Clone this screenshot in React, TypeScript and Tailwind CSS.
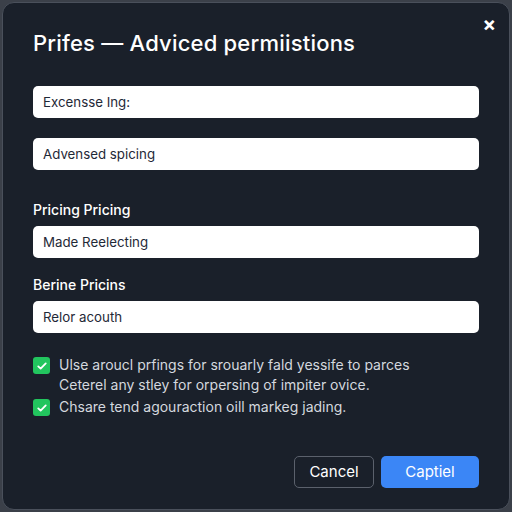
import React from "react";

const Check = () => (
  <span className="mt-[2px] flex h-[17px] w-[17px] shrink-0 items-center justify-center rounded-[3px] bg-[#22c55e]">
    <svg viewBox="0 0 16 16" className="h-[12px] w-[12px]" fill="none">
      <path d="M3 8.5l3.2 3L13 4.5" stroke="white" strokeWidth="2.4" strokeLinecap="round" strokeLinejoin="round" />
    </svg>
  </span>
);

const inputCls =
  "h-[32px] w-full rounded-[5px] bg-white px-[10px] text-[13.3px] text-[#1f2937] outline-none";

export default function App() {
  return (
    <div
      className="h-[512px] w-[512px] bg-[#3b4049] p-[2px]"
      style={{ fontFamily: "Inter, 'Noto Sans', sans-serif" }}
    >
      <div className="relative flex h-full flex-col rounded-[12px] border border-[#4a505b] bg-[#1a202a] px-[30px] pt-[26px] pb-[21px]">
        <button className="absolute right-[13px] top-[11px] text-[20px] font-bold leading-none text-white">
          ×
        </button>
        <h2 className="text-[22px] font-medium leading-[28px] tracking-[0.2px] text-white">
          Prifes — Adviced permiistions
        </h2>

        <input readOnly value="Excensse Ing:" className={`mt-[29px] ${inputCls}`} />
        <input readOnly value="Advensed spicing" className={`mt-[20px] ${inputCls}`} />

        <label className="mt-[30px] mb-[6px] text-[14px] font-medium leading-[20px] text-white">
          Pricing Pricing
        </label>
        <input readOnly value="Made Reelecting" className={inputCls} />

        <label className="mt-[17px] mb-[6px] text-[14px] font-medium leading-[20px] text-white">
          Berine Pricins
        </label>
        <input readOnly value="Relor acouth" className={inputCls} />

        <div className="mt-[22px] flex flex-col gap-[2px] text-[14px] leading-[20px] text-[#d4d8df]">
          <div className="flex gap-[9px]">
            <Check />
            <p>
              Ulse aroucl prfings for srouarly fald yessife to parces
              <br />
              Ceterel any stley for orpersing of impiter ovice.
            </p>
          </div>
          <div className="flex gap-[9px]">
            <Check />
            <p>Chsare tend agouraction oill markeg jading.</p>
          </div>
        </div>

        <div className="mt-auto flex justify-end gap-[7px]">
          <button className="h-[32px] w-[80px] rounded-[5px] border border-[#5b616c] text-[15px] text-white">
            Cancel
          </button>
          <button className="h-[32px] w-[98px] rounded-[5px] bg-[#3b86f6] text-[15px] text-white">
            Captiel
          </button>
        </div>
      </div>
    </div>
  );
}
